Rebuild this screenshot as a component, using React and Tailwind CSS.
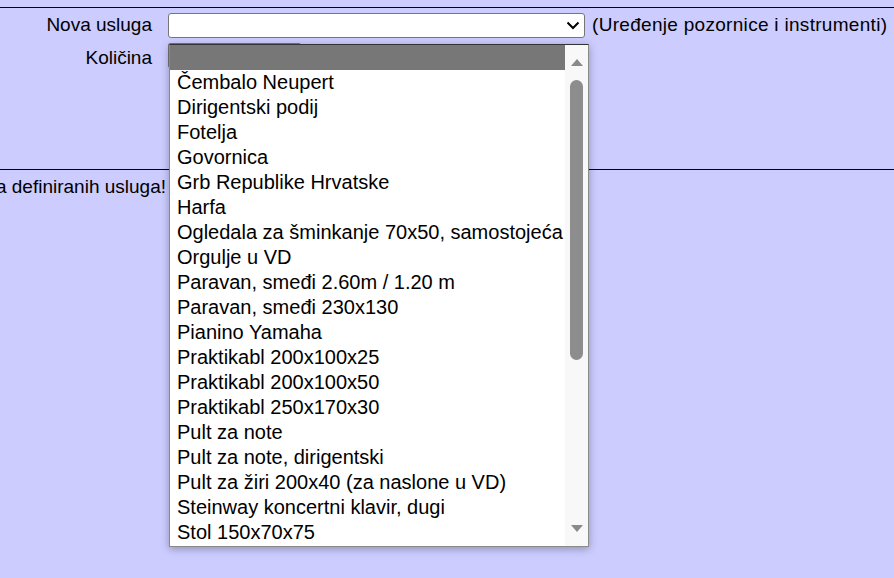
import React from "react";

const items = [
  "Čembalo Neupert",
  "Dirigentski podij",
  "Fotelja",
  "Govornica",
  "Grb Republike Hrvatske",
  "Harfa",
  "Ogledala za šminkanje 70x50, samostojeća",
  "Orgulje u VD",
  "Paravan, smeđi 2.60m / 1.20 m",
  "Paravan, smeđi 230x130",
  "Pianino Yamaha",
  "Praktikabl 200x100x25",
  "Praktikabl 200x100x50",
  "Praktikabl 250x170x30",
  "Pult za note",
  "Pult za note, dirigentski",
  "Pult za žiri 200x40 (za naslone u VD)",
  "Steinway koncertni klavir, dugi",
  "Stol 150x70x75",
];

// open <select> list, drawn over the form
const DropdownList = () => (
  <div className="absolute left-[169px] top-[44px] w-[420px] h-[503px] bg-white border border-[#8a8a8a] border-t-[#333] shadow-[0_2px_8px_rgba(0,0,0,0.3)] flex font-['Liberation_Sans',Arial,sans-serif] text-[20px] text-black">
    <div className="flex-1 flex flex-col">
      <div className="h-[25px] bg-[#777777]" />
      {items.map((item, i) => (
        <div key={i} className="h-[25px] leading-[25px] pl-[7px] whitespace-nowrap">
          {item}
        </div>
      ))}
    </div>
    {/* scrollbar */}
    <div className="w-[23px] bg-[#f8f8f8] flex flex-col items-center pt-[14px]">
      <svg width="12" height="7" viewBox="0 0 12 7">
        <polygon points="6,0 12,7 0,7" fill="#8a8a8a" />
      </svg>
      <div className="w-[13px] h-[280px] mt-[14px] rounded-full bg-[#8d8d8d]" />
      <div className="flex-1" />
      <svg width="12" height="7" viewBox="0 0 12 7" className="mb-[14px]">
        <polygon points="0,0 12,0 6,7" fill="#8a8a8a" />
      </svg>
    </div>
  </div>
);

export default function App() {
  return (
    <div className="relative w-[894px] h-[578px] overflow-hidden bg-[#ccccff] font-['Liberation_Sans',Tahoma,sans-serif] text-[19px] text-black">
      <div className="h-[7px]" />
      <div className="border-t border-black" />
      <div className="flex items-center h-[33px] pt-[1px]">
        <div className="w-[152px] text-right">Nova usluga</div>
        <div className="ml-[16px] w-[417px] h-[25px] bg-white border border-[#767676] rounded-[3px] flex items-center justify-end pr-[4px]">
          <svg width="14" height="9" viewBox="0 0 14 9">
            <path d="M1.5 1.5 L7 7 L12.5 1.5" fill="none" stroke="#000" strokeWidth="2" />
          </svg>
        </div>
        <div className="ml-[7px] whitespace-nowrap tracking-[0.3px]">(Uređenje pozornice i instrumenti)</div>
      </div>
      <div className="flex items-start h-[128px] pt-[1px]">
        <div className="w-[152px] text-right leading-[32px]">Količina</div>
        <div className="ml-[16px] mt-[1px] w-[133px] h-[25px] bg-white border border-[#767676] rounded-[2px]" />
      </div>
      <div className="border-t border-black" />
      <div className="flex h-[34px] items-center">
        <div className="w-[166px] overflow-hidden flex justify-end whitespace-nowrap">
          <span>Nema definiranih usluga!</span>
        </div>
      </div>
      <DropdownList />
    </div>
  );
}
